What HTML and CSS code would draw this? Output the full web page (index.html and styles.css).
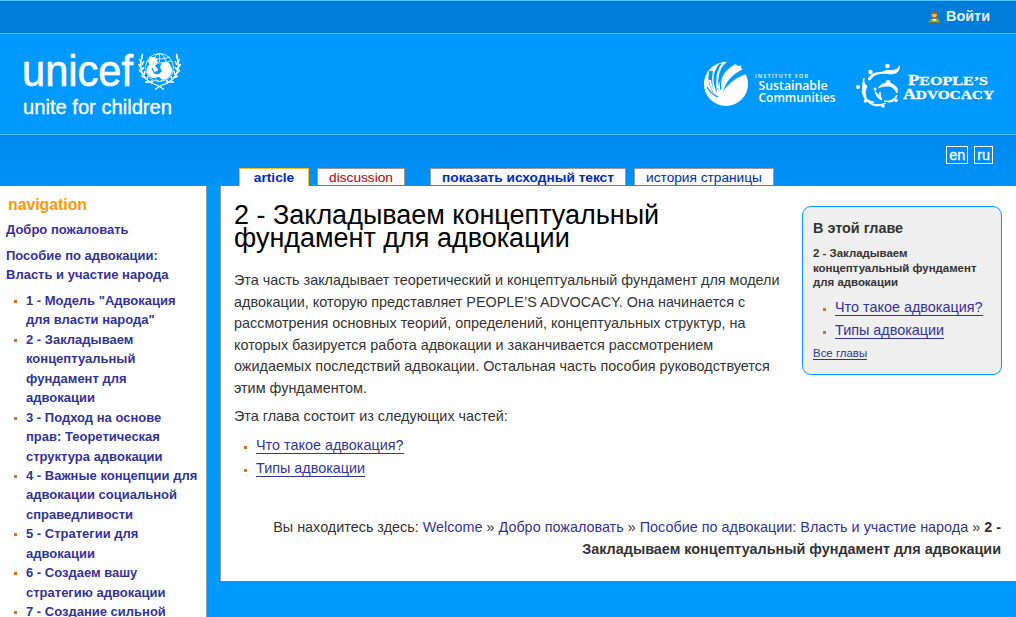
FILE: index.html
```html
<!DOCTYPE html>
<html lang="ru">
<head>
<meta charset="utf-8">
<title>2 - Закладываем концептуальный фундамент для адвокации</title>
<link rel="stylesheet" href="styles.css">
</head>
<body>
<div class="topbar">
  <svg class="user-icon" width="13" height="14" viewBox="0 0 13 14"><path d="M1 12.500q0-4 3-4h4q4 0 4 4z" fill="#79b84e" stroke="#7d7449"/><path d="M4 9l2.500 2.500L9 9z" fill="#eee"/><circle cx="6.300" cy="5" r="3" fill="#efb77b" stroke="#916329"/><path d="M3.500 4q3-4 6 0z" fill="#946b2e"/></svg>
  <a class="login">Войти</a>
</div>
<header class="brand">
  <svg width="1016" height="99" viewBox="0 34 1016 99" fill="#fff">
    <g class="sans">
      <text class="wordmark" x="22" y="86" font-size="44" textLength="111" lengthAdjust="spacingAndGlyphs">unicef</text>
      <text class="tagline" x="23" y="114" font-size="20" textLength="149" lengthAdjust="spacingAndGlyphs">unite for children</text>
    </g>
    <g fill="none" stroke="#fff" stroke-width=".8">
      <circle cx="159.500" cy="67.500" r="14"/>
      <ellipse cx="159.500" cy="67.500" rx="7" ry="14"/>
      <path d="M159.500 53v9M147 61q12 4 25 0M149 57q10 4 21 0"/>
      <path d="M142 57q-4 14 4 22q6 5 12 6.500l6 4M177 57q4 14-4 22q-6 5-12 6.500l-6 4" stroke-width="1.200"/>
      <path d="M142.500 54l-1 5M139.500 59l2 4M144 61l-2 4M138.500 64l3 5M144 67l-2 3M139 70l4 4M145 71l-1 4M141 76l5 2M148 76l-1 4M145 82l6 0M152 80l0 4M176.500 54l1 5M179.500 59l-2 4M175 61l2 4M180.500 64l-3 5M175 67l2 3M180 70l-4 4M174 71l1 4M178 76l-5 2M171 76l1 4M174 82l-6 0M167 80l0 4" stroke-width="1.500"/>
    </g>
    <circle cx="153" cy="61.500" r="4.600"/>
    <circle cx="165.500" cy="67" r="5.200"/>
    <path d="M150 64q-4 3-3 8q2 5 6 6l6-1q3 4 7 2q5-3 6-8q1-4-3-6l-8 7q-2 3-5 2l-2-2 3-1q2-1 0-3l-3-3z"/>
    <path d="M152 68l2 5 4 .5" fill="none" stroke="#0099ff" stroke-width="1.100"/>

    <circle cx="726" cy="84" r="22"/>
    <path d="M730 60q-16 9-12 31q1-18 19-28zM748 67q-21 8-25 25q8-14 29-20zM719 64q-10 13-2 29q-3-15 7-30zM709 71q-3 15 8 27q-7-13-4-27z" fill="#0099ff"/>
    <path d="M741 66q-13 8-16 18M724 62q-9 11-6 26M710 80q1 9 7 16" fill="none" stroke="#fff" stroke-width="2"/>
    <path d="M707 87q4 7 11 10M721 90q-3-12 8-26" fill="none" stroke="#0099ff" stroke-width="1.300"/>
    <g class="humanist">
      <text class="small" x="755" y="77.500" font-size="5.500" textLength="53">INSTITUTE FOR</text>
      <text x="758.500" y="89.500" font-size="13" textLength="69" lengthAdjust="spacingAndGlyphs">Sustainable</text>
      <text x="758.500" y="101.500" font-size="13" textLength="77" lengthAdjust="spacingAndGlyphs">Communities</text>
    </g>
    <g>
      <circle cx="887.500" cy="66" r="2.200"/><circle cx="870.500" cy="72" r="2.200"/><circle cx="858" cy="87" r="2"/><circle cx="888" cy="82.500" r="2.500"/><circle cx="896" cy="100.500" r="1.800"/><circle cx="883" cy="106" r="1.800"/><circle cx="865.500" cy="101" r="1.800"/><circle cx="875" cy="89" r="1.500"/>
      <path d="M880 73q7-4 12-2.500q5 0 7.500-4.500q0 8-9 8q-5-1-10.500-1zM868 79q4-8 15-6q-10 1-13 7zM864 78q-1 6 3 8q-3 5-1 12q-6-7-2-20zM862 91q3 10 12 11q-9 3-12-11zM867 101q8 6 19 2q-10 7-19-2zM884 101q9 1 13-6q-2 10-13 6zM878 88q5-7 14-4q7 3 5 9q-4-8-10-7q-5 0-9 2zM875 91l4 5 1-4q0 5 2 8q-6-2-7-9z" stroke="#fff" stroke-width=".9"/>
    </g>
    <g class="engraved">
      <text x="908" y="85" font-size="15" textLength="80" lengthAdjust="spacingAndGlyphs">P<tspan font-size="13">EOPLE’S</tspan></text>
      <text x="903" y="99" font-size="15" textLength="91" lengthAdjust="spacingAndGlyphs">A<tspan font-size="13">DVOCACY</tspan></text>
    </g>
  </svg>
</header>
<div class="toolbar">
  <nav class="tabs">
    <a class="tab active">article</a><a class="tab new">discussion</a><a class="tab source">показать исходный текст</a><a class="tab history">история страницы</a>
  </nav>
  <div class="langs"><a>en</a><a>ru</a></div>
</div>
<div class="columns">
  <aside class="sidebar">
    <h2>navigation</h2>
    <p>Добро пожаловать</p>
    <p class="guide">Пособие по адвокации:<br>Власть и участие народа</p>
    <ul>
      <li>1 - Модель "Адвокация<br>для власти народа"</li>
      <li>2 - Закладываем<br>концептуальный<br>фундамент для<br>адвокации</li>
      <li>3 - Подход на основе<br>прав: Теоретическая<br>структура адвокации</li>
      <li>4 - Важные концепции для<br>адвокации социальной<br>справедливости</li>
      <li>5 - Стратегии для<br>адвокации</li>
      <li>6 - Создаем вашу<br>стратегию адвокации</li>
      <li>7 - Создание сильной</li>
    </ul>
  </aside>
  <main class="content">
    <div class="top">
      <article>
        <h1>2 - Закладываем концептуальный<br>фундамент для адвокации</h1>
        <p>Эта часть закладывает теоретический и концептуальный фундамент для модели<br>адвокации, которую представляет PEOPLE’S ADVOCACY. Она начинается с<br>рассмотрения основных теорий, определений, концептуальных структур, на<br>которых базируется работа адвокации и заканчивается рассмотрением<br>ожидаемых последствий адвокации. Остальная часть пособия руководствуется<br>этим фундаментом.</p>
        <p>Эта глава состоит из следующих частей:</p>
        <ul class="links"><li><a>Что такое адвокация?</a></li><li><a>Типы адвокации</a></li></ul>
      </article>
      <section class="chapter">
        <h3>В этой главе</h3>
        <h4>2 - Закладываем<br>концептуальный фундамент<br>для адвокации</h4>
        <ul class="links"><li><a>Что такое адвокация?</a></li><li><a>Типы адвокации</a></li></ul>
        <a class="all">Все главы</a>
      </section>
    </div>
    <div class="crumbs">Вы находитесь здесь: <a>Welcome</a> » <a>Добро пожаловать</a> » <a>Пособие по адвокации: Власть и участие народа</a> » <b>2 -<br>Закладываем концептуальный фундамент для адвокации</b></div>
  </main>
</div>
</body>
</html>
```
FILE: styles.css
```css
* { box-sizing: border-box; }
body { margin: 0; width: 1016px; height: 617px; overflow: hidden; background: #0099ff; color: #333; font: 14.4px/21.6px "Liberation Sans", Arial, sans-serif; }
h1, h2, h3, h4, p, ul { margin: 0; padding: 0; font-weight: normal; }
ul { list-style: none; }
svg { display: block; }
.topbar { height: 34px; border-top: 1px solid #4dc3ff; border-bottom: 1px solid #4dc3ff; background: #007dda; display: flex; justify-content: flex-end; align-items: center; gap: 5px; padding: 0 26px 1px 0; }
.login { color: #e6f0fb; font-weight: bold; font-size: 14.4px; }
.brand { height: 100px; }
.sans { font-family: "Liberation Sans", Arial, sans-serif; }
.wordmark { stroke: #fff; stroke-width: .6px; }
.tagline { stroke: #fff; stroke-width: .3px; }
.humanist { font-family: "Open Sans", sans-serif; font-weight: 600; }
.small { font-weight: 600; }
.engraved { font-family: "Liberation Serif", serif; font-weight: bold; stroke: #fff; stroke-width: .3px; }
.toolbar { height: 52px; border-top: 1px solid #4dc3ff; border-bottom: 1px solid #777; background: linear-gradient(#0089ef, #0092f7); display: flex; justify-content: space-between; padding: 0 23px 0 239px; }
.tabs { display: flex; align-items: flex-end; }
.tab { height: 17px; border: 1px solid #999; border-bottom: 0; background: #fbfbfb; color: #002bb8; font-size: 13.7px; line-height: 17px; text-align: center; white-space: nowrap; }
.active { width: 70px; height: 18px; margin-bottom: -1px; border-color: #fabd23; background: #fff; font-weight: bold; }
.new { width: 88px; margin-left: 8px; color: #ba0000; }
.source { width: 196px; margin-left: 25px; font-weight: bold; }
.history { width: 140px; margin-left: 8px; }
.langs { display: flex; gap: 6px; padding-top: 11px; }
.langs a { height: 18px; border: 1px solid #fff; padding: 0 2px; color: #fff; font-size: 14.4px; line-height: 17px; -webkit-text-stroke: .3px #fff; }
.columns { display: flex; gap: 13px; align-items: flex-start; }
.sidebar { width: 207px; height: 431px; background: #fff; border-right: 1px solid #999; color: #339; font-size: 13px; line-height: 19px; padding: 9px 0 0 6px; white-space: nowrap; }
.sidebar p, .sidebar li { font-weight: bold; }
.sidebar h2 { color: #f90; font-weight: bold; font-size: 15.8px; line-height: 20px; padding-left: 2px; margin-bottom: 5px; }
.sidebar .guide { margin: 7px 0; }
.sidebar li { position: relative; padding-left: 20px; line-height: 19.43px; }
.sidebar li::before, .links li::before { content: ""; position: absolute; left: 8px; top: 9px; width: 3px; height: 3px; background: #e66b1f; }
.content { width: 796px; height: 395px; background: #fff; border-left: 1px solid #999; padding: 18px 14px 0 13px; white-space: nowrap; }
.top { display: flex; justify-content: space-between; height: 313px; }
h1 { color: #000; font-size: 27px; line-height: 23px; letter-spacing: -0.01px; margin-bottom: 20px; }
article p { margin-bottom: 6.500px; }
.links li { position: relative; height: 23px; padding-left: 22px; line-height: 23px; }
.links li::before { left: 10px; top: 12px; }
.links a { color: #339; display: inline-block; line-height: 15px; border-bottom: 1px solid #339; }
.chapter { width: 200px; height: 169px; margin-top: 2px; border: 1px solid #0099ff; border-radius: 9px; background: #efefef; padding: 10px; }
.chapter h3 { font-size: 14.4px; font-weight: bold; line-height: 22px; margin-bottom: 7px; }
.chapter h4 { font-size: 11.45px; font-weight: bold; line-height: 14.5px; margin-bottom: 6px; }
.all { color: #339; font-size: 11.45px; display: inline-block; line-height: 12px; border-bottom: 1px solid #339; }
.crumbs { text-align: right; padding-right: 1px; }
.crumbs a { color: #339; }
```
